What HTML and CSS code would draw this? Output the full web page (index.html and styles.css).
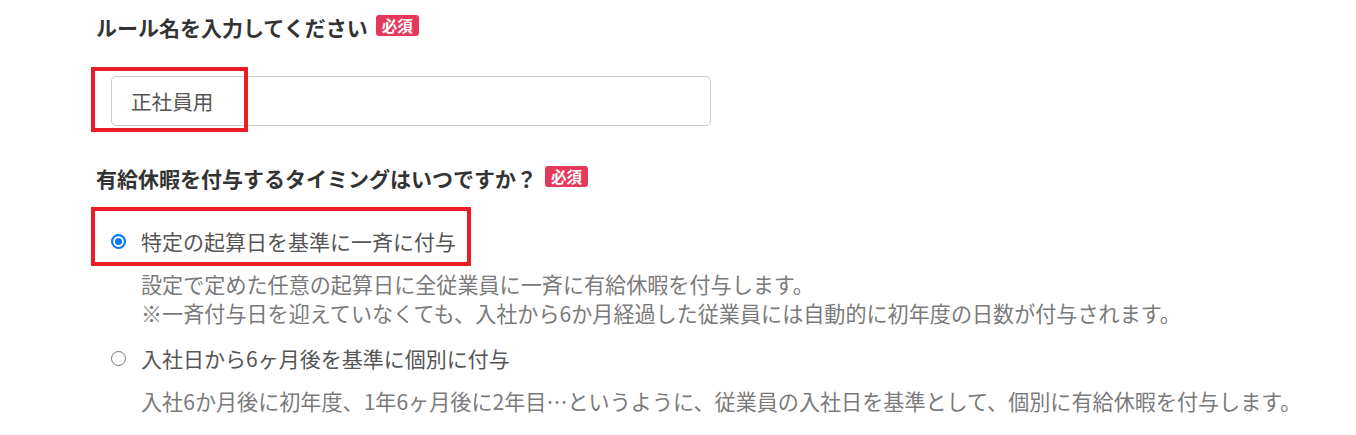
FILE: index.html
```html
<!DOCTYPE html>
<html lang="ja">
<head>
    <meta charset="UTF-8">
    <meta name="viewport" content="width=device-width, initial-scale=1.0">
    <title>有給休暇ルール</title>
    <link rel="stylesheet" href="styles.css">
</head>
<body>
    <div class="form">
        <div class="field">
            <div class="label">ルール名を入力してください<span class="required">必須</span></div>
            <div class="input-wrap">
                <span class="mark mark-name"></span>
                <input class="text-input" type="text" value="正社員用">
            </div>
        </div>

        <div class="field field-timing">
            <div class="label">有給休暇を付与するタイミングはいつですか？<span class="required">必須</span></div>

            <div class="option option-first">
                <span class="mark mark-option"></span>
                <label class="option-label">
                    <input type="radio" name="timing" checked>
                    <span>特定の起算日を基準に一斉に付与</span>
                </label>
                <p class="option-desc">設定で定めた任意の起算日に全従業員に一斉に有給休暇を付与します。<br>※一斉付与日を迎えていなくても、入社から6か月経過した従業員には自動的に初年度の日数が付与されます。</p>
            </div>

            <div class="option">
                <label class="option-label">
                    <input type="radio" name="timing">
                    <span>入社日から6ヶ月後を基準に個別に付与</span>
                </label>
                <p class="option-desc">入社6か月後に初年度、1年6ヶ月後に2年目…というように、従業員の入社日を基準として、個別に有給休暇を付与します。</p>
            </div>
        </div>
    </div>
</body>
</html>
```

FILE: styles.css
```css
body {
    margin: 0;
    background-color: #fff;
    font-family: "Noto Sans CJK JP", "Noto Sans", sans-serif;
    color: #333;
}
.form {
    padding: 12px 0 0 96px;
}
.label {
    display: flex;
    align-items: center;
    font-size: 21px;
    font-weight: bold;
    line-height: 30px;
    color: #333;
}
.required {
    display: inline-block;
    margin-left: 8px;
    margin-top: -4px;
    padding: 0 6px;
    height: 21px;
    line-height: 21px;
    font-size: 15.5px;
    font-weight: bold;
    color: #fff;
    background-color: #e5395b;
    border-radius: 3px;
}
.input-wrap {
    position: relative;
    margin-top: 34px;
    margin-left: 15px;
}
.text-input {
    display: block;
    box-sizing: border-box;
    width: 600px;
    height: 50px;
    padding: 0 19px;
    border: 1px solid #ccc;
    border-radius: 5px;
    font-family: inherit;
    font-size: 20.6px;
    color: #555;
    outline: none;
}
.mark {
    position: absolute;
    border: 4px solid #ec1c24;
    pointer-events: none;
    z-index: 1;
}
.mark-name {
    left: -20px;
    top: -9px;
    width: 149px;
    height: 57px;
}
.field-timing {
    margin-top: 37px;
}
.option {
    position: relative;
    margin-left: 15px;
}
.option-first {
    margin-top: 33px;
}
.option + .option {
    margin-top: 15px;
}
.mark-option {
    left: -20px;
    top: -19px;
    width: 372px;
    height: 51px;
}
.option-label {
    display: flex;
    align-items: center;
    height: 30px;
    font-size: 21px;
    color: #555;
}
.option-label input {
    appearance: none;
    box-sizing: border-box;
    width: 15px;
    height: 15px;
    margin: 0 15px 0 0;
    border: 1.5px solid #767676;
    border-radius: 50%;
    background-color: #fff;
}
.option-label input:checked {
    border: 2px solid #0a75ff;
    box-shadow: inset 0 0 0 2px #fff;
    background-color: #0a75ff;
}
.option-desc {
    margin: 14px 0 0 30px;
    font-size: 21.1px;
    line-height: 29px;
    color: #7a7a7a;
}
```
